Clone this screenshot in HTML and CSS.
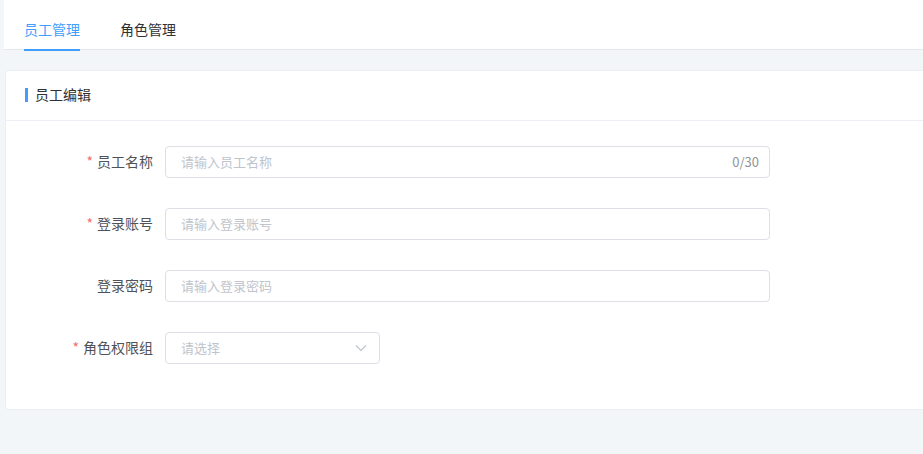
FILE: index.html
```html
<!DOCTYPE html>
<html lang="zh-CN">
<head>
    <meta charset="UTF-8">
    <title>员工编辑</title>
    <link rel="stylesheet" href="styles.css">
</head>
<body>
    <div class="tabs">
        <div class="tab active">员工管理</div>
        <div class="tab">角色管理</div>
    </div>

    <div class="card">
        <div class="card-header">
            <span class="bar"></span><span class="title">员工编辑</span>
        </div>
        <div class="form">
            <div class="form-item">
                <label class="label required">员工名称</label>
                <div class="input">
                    <span class="placeholder">请输入员工名称</span>
                    <span class="count">0/30</span>
                </div>
            </div>
            <div class="form-item">
                <label class="label required">登录账号</label>
                <div class="input">
                    <span class="placeholder">请输入登录账号</span>
                </div>
            </div>
            <div class="form-item">
                <label class="label">登录密码</label>
                <div class="input">
                    <span class="placeholder">请输入登录密码</span>
                </div>
            </div>
            <div class="form-item">
                <label class="label required">角色权限组</label>
                <div class="input select">
                    <span class="placeholder">请选择</span>
                    <svg class="arrow" width="12" height="12" viewBox="0 0 12 12">
                        <path d="M1 3.5 L6 8.5 L11 3.5" fill="none" stroke="#c0c4cc" stroke-width="1.2"/>
                    </svg>
                </div>
            </div>
        </div>
    </div>
</body>
</html>
```

FILE: styles.css
```css
* {
    margin: 0;
    padding: 0;
    box-sizing: border-box;
}

body {
    font-family: "Noto Sans CJK SC", "Noto Sans", sans-serif;
    background-color: #f3f6f9;
    color: #303133;
    font-size: 14px;
    padding-left: 4px;
}

.tabs {
    background: #fff;
    height: 50px;
    border-bottom: 1px solid #e4e7ed;
    display: flex;
    padding-left: 20px;
    gap: 40px;
}

.tab {
    height: 49px;
    line-height: 58px;
    font-size: 14px;
    color: #303133;
}

.tab.active {
    color: #409eff;
    border-bottom: 2px solid #409eff;
    height: 51px;
}

.card {
    margin-top: 20px;
    margin-left: 1px;
    background: #fff;
    border: 1px solid #ebeef5;
    border-right: none;
    border-radius: 4px 0 0 4px;
    height: 340px;
}

.card-header {
    height: 50px;
    border-bottom: 1px solid #ebeef5;
    display: flex;
    align-items: center;
    padding-left: 19px;
    font-size: 14px;
    color: #303133;
}

.title {
    line-height: 20px;
    margin-top: -4px;
}

.bar {
    width: 3px;
    height: 14px;
    background: #409eff;
    margin-right: 7px;
    margin-top: -2px;
}

.form {
    padding-top: 25px;
}

.form-item {
    display: flex;
    align-items: center;
    margin-bottom: 30px;
}

.label {
    width: 159px;
    text-align: right;
    padding-right: 12px;
    color: #505257;
    font-size: 14px;
    line-height: 20px;
    margin-top: -3px;
}

.label.required::before {
    content: "*";
    color: #f56c6c;
    margin-right: 4px;
}

.input {
    width: 605px;
    height: 32px;
    border: 1px solid #dcdfe6;
    border-radius: 4px;
    display: flex;
    align-items: center;
    justify-content: space-between;
    padding: 0 10px 0 15px;
    font-size: 14px;
}

.input.select {
    width: 215px;
    padding-right: 12px;
}

.placeholder {
    color: #c0c4cc;
    font-size: 13px;
    margin-top: -2px;
}

.count {
    color: #909399;
    font-size: 13px;
    margin-top: -2px;
}
```
